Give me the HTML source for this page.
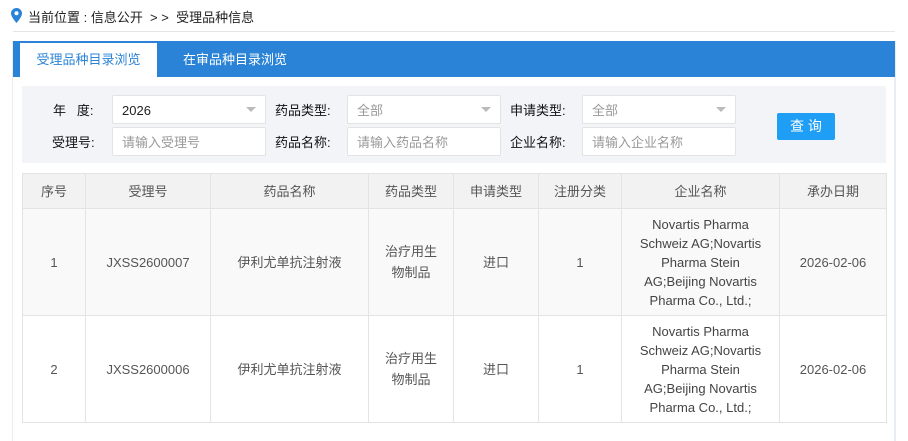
<!DOCTYPE html>
<html><head><meta charset="utf-8"><style>
*{margin:0;padding:0;box-sizing:border-box}
body{width:908px;height:430px;background:#fff;font-family:"Liberation Sans","Noto Sans CJK SC",sans-serif;font-size:13px;color:#333;position:relative;overflow:hidden}
.a{position:absolute}
.bc{left:28px;top:7px;font-size:13px;color:#222}
.line{left:13px;top:31px;width:882px;height:1px;background:#e5e5e5}
.panel{left:12px;top:41px;width:884px;height:400px;border-left:1px solid #e8edf3;border-right:2px solid #e8edf3}
.hdr{left:13px;top:41px;width:882px;height:36px;background:#2a83d6}
.tab{left:20px;top:43px;width:137px;height:34px;background:#fff;color:#2a83d6;font-size:13px;text-align:center;line-height:34px}
.tab2{left:183px;top:43px;color:#fff;line-height:34px;font-size:13px}
.flt{left:22px;top:86px;width:864px;height:77px;background:#f3f4f8}
.lb{font-size:13px;color:#111}
.in{background:#fff;border:1px solid #e3e3e3;border-radius:2px;height:29px;line-height:29px;padding-left:9px;font-size:13px;color:#999}
.dd:after{content:"";position:absolute;right:9px;top:11px;border-left:5px solid transparent;border-right:5px solid transparent;border-top:5px solid #bbb}
.btn{left:777px;top:113px;width:58px;height:27px;background:#1e9ef5;color:#fff;text-align:center;line-height:27px;font-size:14px;border-radius:2px}
table{position:absolute;left:22px;top:173px;width:864px;border-collapse:collapse;table-layout:fixed}
td,th{border:1px solid #e3e3e3;text-align:center;font-weight:normal;color:#555;font-size:13px;line-height:21px}
td.en{padding:0 10px;color:#444;line-height:19px}
th{background:#f2f2f2;height:35px}
tr.r1 td{background:#f9f9f9;height:107px}
tr.r2 td{background:#fff;height:107px}
</style></head><body>
<div class="a bc"><svg width="11" height="15" viewBox="0 0 11 15" style="position:absolute;left:-17px;top:1px"><path d="M5.5 0C2.5 0 0 2.4 0 5.4 0 9 5.5 15 5.5 15S11 9 11 5.4C11 2.4 8.5 0 5.5 0z" fill="#2a83d6"/><circle cx="5.5" cy="5.3" r="2" fill="#fff"/></svg>当前位置 : 信息公开 &nbsp;&gt; &gt; &nbsp;受理品种信息</div>
<div class="a line"></div>
<div class="a panel"></div>
<div class="a hdr"></div>
<div class="a tab">受理品种目录浏览</div>
<div class="a tab2">在审品种目录浏览</div>
<div class="a flt"></div>
<div class="a lb" style="left:53px;top:100px">年&nbsp;&nbsp;&nbsp;度:</div>
<div class="a lb" style="left:52px;top:132px">受理号:</div>
<div class="a in dd" style="left:112px;top:95px;width:154px;color:#222">2026</div>
<div class="a in" style="left:112px;top:127px;width:154px">请输入受理号</div>
<div class="a lb" style="left:275px;top:100px">药品类型:</div>
<div class="a lb" style="left:275px;top:132px">药品名称:</div>
<div class="a in dd" style="left:347px;top:95px;width:154px">全部</div>
<div class="a in" style="left:347px;top:127px;width:154px">请输入药品名称</div>
<div class="a lb" style="left:510px;top:100px">申请类型:</div>
<div class="a lb" style="left:510px;top:132px">企业名称:</div>
<div class="a in dd" style="left:582px;top:95px;width:154px">全部</div>
<div class="a in" style="left:582px;top:127px;width:154px">请输入企业名称</div>
<div class="a btn">查 询</div>
<table>
<colgroup><col style="width:63px"><col style="width:125px"><col style="width:158px"><col style="width:85px"><col style="width:85px"><col style="width:83px"><col style="width:158px"><col style="width:107px"></colgroup>
<tr><th>序号</th><th>受理号</th><th>药品名称</th><th>药品类型</th><th>申请类型</th><th>注册分类</th><th>企业名称</th><th>承办日期</th></tr>
<tr class="r1"><td>1</td><td>JXSS2600007</td><td>伊利尤单抗注射液</td><td>治疗用生<br>物制品</td><td>进口</td><td>1</td><td class="en">Novartis Pharma<br>Schweiz AG;Novartis<br>Pharma Stein<br>AG;Beijing Novartis<br>Pharma Co., Ltd.;</td><td>2026-02-06</td></tr>
<tr class="r2"><td>2</td><td>JXSS2600006</td><td>伊利尤单抗注射液</td><td>治疗用生<br>物制品</td><td>进口</td><td>1</td><td class="en">Novartis Pharma<br>Schweiz AG;Novartis<br>Pharma Stein<br>AG;Beijing Novartis<br>Pharma Co., Ltd.;</td><td>2026-02-06</td></tr>
</table>
</body></html>
